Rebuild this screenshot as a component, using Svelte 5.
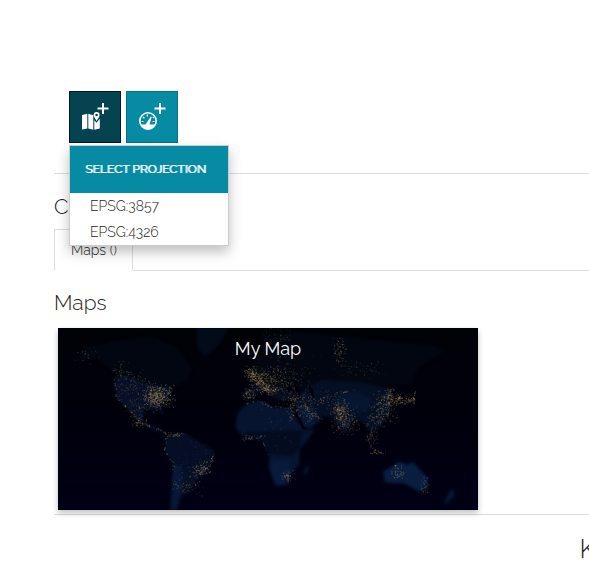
<script>
  const projections = ['EPSG:3857', 'EPSG:4326'];

  // Land masses in the 1260 x 546 viewBox of the thumbnail.
  const land = [
    { fill: '#010610', d: 'M50 110 L80 60 L160 40 L280 25 L360 60 L400 120 L390 160 L350 175 L330 210 L250 230 L170 190 L165 130 L110 85 Z' },
    { fill: '#020b1a', d: 'M415 0 L510 0 L490 40 L455 75 L435 88 L418 55 Z' },
    { fill: '#060f26', d: 'M168 155 L200 140 L255 165 L345 180 L330 210 L308 235 L318 262 L300 246 L260 246 L254 280 L285 292 L328 318 L285 306 L245 285 L205 238 L176 210 Z' },
    { fill: '#050e24', d: 'M325 328 L350 314 L385 318 L430 345 L470 370 L456 420 L428 445 L396 490 L366 512 L358 546 L336 546 L342 470 L346 412 L318 365 Z' },
    { fill: '#071836', d: 'M345 405 L372 420 L372 480 L356 546 L338 546 Z' },
    { fill: '#061430', d: 'M560 232 L600 218 L630 222 L640 236 L700 240 L715 272 L740 306 L770 304 L750 335 L725 362 L724 408 L702 436 L688 472 L652 474 L632 420 L634 378 L608 336 L560 333 L532 298 L538 258 Z' },
    { fill: '#030b1f', d: 'M565 310 L735 306 L725 360 L700 385 L640 378 L608 335 L560 332 Z' },
    { fill: '#081b3c', d: 'M642 400 L690 396 L698 425 L682 468 L654 470 L638 430 Z' },
    { fill: '#010610', d: 'M560 150 L580 120 L640 20 L720 10 L900 30 L1120 50 L1160 70 L1080 120 L1060 170 L880 170 L700 185 L600 180 Z' },
    { fill: '#050c1e', d: 'M557 210 L560 182 L600 170 L680 175 L720 195 L700 222 L650 215 L625 190 L590 200 L570 218 Z' },
    { fill: '#040f24', d: 'M708 222 L745 175 L800 155 L900 162 L1000 180 L1000 250 L970 290 L940 320 L920 285 L890 272 L862 318 L838 290 L820 264 L788 266 L762 300 L738 300 L715 255 Z' },
    { fill: '#061630', d: 'M830 205 L900 190 L940 215 L925 250 L870 242 L840 225 Z' },
    { fill: '#061735', d: 'M716 245 L745 235 L775 264 L785 275 L762 296 L740 298 Z' },
    { fill: '#081d40', d: 'M980 462 L975 430 L1005 415 L1025 400 L1048 410 L1065 402 L1090 430 L1110 450 L1105 480 L1085 492 L1055 475 L1035 466 L1005 466 Z' },
    { fill: '#06142d', d: 'M736 430 L752 405 L750 435 L738 440 Z' },
    { fill: '#081835', d: 'M1182 480 L1190 500 L1165 528 L1160 520 Z' }
  ];

  // Water that cuts into the land.
  const water = [
    'M258 246 L305 246 L315 275 L300 290 L262 285 Z',
    'M598 206 L622 190 L650 216 L705 222 L706 238 L640 234 L625 220 L600 216 Z',
    'M684 180 L715 178 L728 190 L700 196 L686 192 Z',
    'M750 172 L764 180 L768 210 L756 200 Z',
    'M704 244 L712 246 L742 302 L734 304 Z'
  ];

  // Lit regions: centre, spread, number of points, brightness.
  const regions = [
    [300, 205, 52, 38, 420, 0.5], [285, 205, 40, 50, 130, 0.4], [225, 170, 65, 50, 130, 0.35],
    [185, 125, 30, 35, 45, 0.35], [80, 80, 50, 30, 30, 0.35], [235, 245, 40, 50, 80, 0.35],
    [245, 283, 28, 16, 45, 0.5], [350, 318, 36, 10, 55, 0.45], [430, 425, 30, 28, 90, 0.5],
    [385, 470, 50, 34, 75, 0.4], [400, 390, 90, 70, 50, 0.22], [578, 135, 22, 25, 110, 0.55],
    [605, 158, 38, 35, 230, 0.55], [650, 155, 70, 48, 220, 0.4], [630, 185, 34, 18, 100, 0.5],
    [570, 200, 20, 20, 60, 0.45], [690, 130, 110, 70, 120, 0.3], [660, 30, 50, 45, 75, 0.3],
    [715, 212, 60, 26, 130, 0.4], [725, 238, 45, 28, 80, 0.4], [845, 70, 24, 50, 90, 0.4],
    [910, 125, 90, 30, 65, 0.3], [845, 245, 28, 34, 180, 0.45], [860, 275, 48, 48, 260, 0.38],
    [805, 210, 70, 34, 65, 0.35], [980, 225, 40, 44, 220, 0.38], [965, 265, 55, 36, 160, 0.35],
    [995, 205, 14, 30, 60, 0.45], [1022, 215, 12, 18, 60, 0.5], [1050, 215, 26, 12, 50, 0.4],
    [940, 320, 24, 40, 70, 0.35], [960, 374, 34, 5, 30, 0.4], [585, 329, 40, 10, 45, 0.4],
    [687, 442, 20, 20, 50, 0.5], [660, 290, 90, 100, 50, 0.18], [1018, 430, 22, 26, 60, 0.5],
    [1098, 470, 14, 34, 40, 0.4], [700, 250, 10, 30, 25, 0.5], [755, 255, 30, 34, 65, 0.4]
  ];

  // Lit coasts and railways: number of lights per leg, then a chain of points.
  const chains = [
    [12, [168, 150], [174, 205], [205, 240], [250, 285], [290, 298], [325, 318]],
    [8, [318, 365], [345, 405], [350, 470]],
    [10, [325, 330], [318, 365]],
    [12, [465, 370], [455, 410], [430, 430]],
    [14, [740, 228], [752, 255], [790, 270]],
    [14, [780, 215], [835, 195], [890, 184]],
    [10, [925, 320], [940, 362], [980, 376]],
    [12, [1035, 228], [1065, 215], [1070, 185]],
    [6, [610, 336], [632, 375]],
    [8, [560, 228], [600, 216], [632, 234], [700, 238]]
  ];

  let seed = 4219;
  const random = () => {
    seed = (seed * 1664525 + 1013904223) % 4294967296;
    return seed / 4294967296;
  };
  const lightAt = (x, y, level) => ({
    x,
    y,
    opacity: level * (0.2 + random() * 0.8),
    size: 2 + random() * 2
  });
  const lights = regions.flatMap(([x, y, w, h, n, level]) =>
    Array.from({ length: n }, () =>
      lightAt(x + (random() + random() - 1) * w, y + (random() + random() - 1) * h, level)
    )
  );
  for (const [n, ...points] of chains) {
    for (let leg = 1; leg < points.length; leg++) {
      const [ax, ay] = points[leg - 1];
      const [bx, by] = points[leg];
      for (let i = 0; i < n; i++) {
        const t = random();
        lights.push(lightAt(ax + (bx - ax) * t + random() * 6 - 3, ay + (by - ay) * t + random() * 6 - 3, 0.5));
      }
    }
  }
</script>

<div class="page">
  <header class="toolbar">
    <div class="new-map">
      <button class="tool active" aria-label="New map" aria-expanded="true">
        <svg viewBox="0 0 50 50" aria-hidden="true">
          <path d="M12 23l5.300-1.200v14.600L12 37.600zM18.300 21.800l5 1.500v14.500l-5-1.400zM24.300 28.200l2.200 2.600 3.300-4v9.600l-5.500 1.400z" />
          <path fill-rule="evenodd" d="M26.600 20a3 3 0 0 1 3 3c0 1.800-2 4.200-3 6-1-1.800-3-4.200-3-6a3 3 0 0 1 3-3zm0 1.700a1.300 1.300 0 1 0 0 2.600 1.300 1.300 0 0 0 0-2.600z" />
          <path d="M32 11h2v4.500h4.500v2H34V22h-2v-4.500h-4.500v-2H32z" />
        </svg>
      </button>
      <div class="menu">
        <div class="menu-title">SELECT PROJECTION</div>
        <ul>
          {#each projections as projection}
            <li><a href="#new-map">{projection}</a></li>
          {/each}
        </ul>
      </div>
    </div>
    <button class="tool" aria-label="New dashboard">
      <svg viewBox="0 0 50 50" aria-hidden="true">
        <circle cx="21" cy="29" r="8.200" fill="none" stroke="#fff" stroke-width="1.600" />
        <path d="M13.500 32.600h5l1-1.600 4.300-6.500.9.500-2.200 7.600h6C27.500 35.500 24.500 37.500 21 37.500s-6.500-2-7.500-4.900z" />
        <path d="M14.500 29.500h2M16 25l1.400 1.200M20.300 22.500v2M25.800 25.800l1-1M25.500 29.500h2" fill="none" stroke="#fff" stroke-width="1.200" />
        <path d="M32 11h2v4.500h4.500v2H34V22h-2v-4.500h-4.500v-2H32z" />
      </svg>
    </button>
  </header>

  <main>
    <h2>Contents</h2>
    <nav><a class="tab" href="#maps">Maps ()</a></nav>
    <section id="maps">
      <h3>Maps</h3>
      <a class="card" href="#my-map">
        <svg class="world" viewBox="0 0 1260 546" preserveAspectRatio="none" aria-hidden="true">
          <defs>
            <linearGradient id="sea" x2="0" y2="1"><stop stop-color="#010207" /><stop offset=".5" stop-color="#00000c" /><stop offset="1" stop-color="#000015" /></linearGradient>
            <filter id="soft" color-interpolation-filters="sRGB"><feGaussianBlur stdDeviation="5" /></filter>
            <filter id="shore" color-interpolation-filters="sRGB"><feGaussianBlur stdDeviation="2" /></filter>
          </defs>
          <rect width="1260" height="546" fill="url(#sea)" />
          <g filter="url(#soft)">
            {#each land as { fill, d }}<path {d} {fill} />{/each}
          </g>
          <g filter="url(#shore)">
            {#each water as d}<path {d} fill="#00000c" />{/each}
          </g>
          {#each lights as light}
            <rect x={light.x} y={light.y} width={light.size} height={light.size} fill="#b0925f" opacity={light.opacity} />
          {/each}
        </svg>
        <span class="card-title">My Map</span>
      </a>
    </section>
  </main>

  <footer><span>K</span></footer>
</div>

<style>
  :global(body) { margin: 0; overflow: hidden; background: #fff; }
  .page { padding: 91px 0 0 54px; color: #222; font-family: Raleway, Lato, "Open Sans", sans-serif; font-size: 14px; font-weight: 300; line-height: 20px; }
  .toolbar { display: flex; gap: 5px; padding: 0 15px 30px; border-bottom: 1px solid #ddd; }
  .new-map { position: relative; }
  .tool { display: block; box-sizing: border-box; width: 52px; height: 52px; padding: 0; border: 1px solid #07708a; background: #078aa3; }
  .tool.active { border-color: #001b20; background: #04434f; }
  .tool svg { display: block; width: 50px; height: 50px; fill: #fff; }
  .menu { position: absolute; z-index: 1; top: 54px; left: 0; box-sizing: border-box; width: 160px; border: 1px solid #ccc; background: #fff; box-shadow: 0 6px 12px rgba(0, 0, 0, 0.25); }
  .menu-title { padding: 13px 15px 14px; background: #078aa3; color: #fff; font-size: 12px; font-weight: 400; text-shadow: 1px 0 #fff; white-space: nowrap; }
  ul { margin: 0; padding: 0; list-style: none; }
  li a { display: block; padding: 3px 20px; color: #222; text-decoration: none; }
  h2, h3 { margin: 0; font-size: 21px; font-weight: 300; line-height: 24px; }
  h2 { padding: 21px 0 10px; }
  nav { display: flex; border-bottom: 1px solid #ddd; }
  .tab { margin-bottom: -1px; padding: 10px 15px 10px 16px; border: 1px solid #ddd; border-bottom-color: #fff; color: #222; text-decoration: none; }
  section { padding: 20px 4px 4px 0; }
  .card { position: relative; display: block; max-width: 420px; height: 182px; margin: 13px 0 0 4px; box-shadow: 0 3px 6px rgba(0, 0, 0, 0.25); }
  .world { display: block; width: 100%; height: 100%; }
  .card-title { position: absolute; top: 9px; left: 0; width: 100%; color: #fff; font-size: 18px; font-weight: 400; line-height: 24px; text-align: center; }
  footer { display: flex; justify-content: flex-end; border-top: 1px solid #ddd; padding-top: 18px; font-size: 26px; line-height: 32px; }
  footer span { margin-right: -7px; }
</style>
